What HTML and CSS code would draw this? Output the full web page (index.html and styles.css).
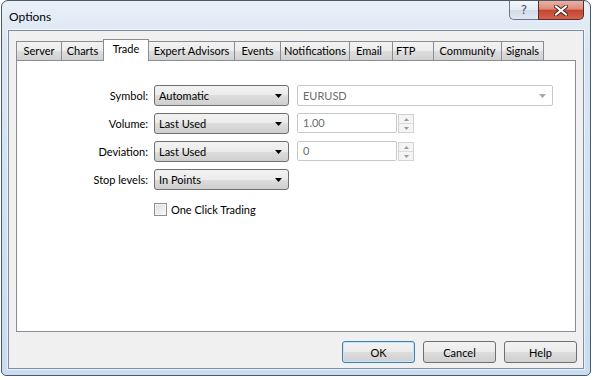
FILE: index.html
```html
<!DOCTYPE html>
<html lang="en">
<head>
    <meta charset="UTF-8">
    <title>Options</title>
    <link rel="stylesheet" href="styles.css">
</head>
<body>
    <div class="window">
        <div class="titlebar">
            <span class="title">Options</span>
            <div class="caption-buttons">
                <div class="cap-btn cap-help">?</div>
                <div class="cap-btn cap-close">
                    <svg width="14" height="11" viewBox="0 0 14 11">
                        <path d="M2 1.5 L12 9.5 M12 1.5 L2 9.5" stroke="#4a2620" stroke-width="4" stroke-linecap="square"/>
                        <path d="M2 1.5 L12 9.5 M12 1.5 L2 9.5" stroke="#ffffff" stroke-width="2" stroke-linecap="square"/>
                    </svg>
                </div>
            </div>
        </div>

        <div class="client">
            <div class="tabs">
                <div class="tab tab-server">Server</div>
                <div class="tab tab-charts">Charts</div>
                <div class="tab tab-trade active">Trade</div>
                <div class="tab tab-experts">Expert Advisors</div>
                <div class="tab tab-events">Events</div>
                <div class="tab tab-notify">Notifications</div>
                <div class="tab tab-email">Email</div>
                <div class="tab tab-ftp">FTP</div>
                <div class="tab tab-community">Community</div>
                <div class="tab tab-signals">Signals</div>
            </div>

            <div class="panel">
                <div class="form">
                    <div class="field-label">Symbol:</div>
                    <div class="combo">
                        <span>Automatic</span>
                        <svg class="arrow" width="7" height="4" viewBox="0 0 7 4"><polygon points="0,0 7,0 3.5,4"/></svg>
                    </div>
                    <div class="combo combo-disabled combo-wide">
                        <span>EURUSD</span>
                        <svg class="arrow" width="7" height="4" viewBox="0 0 7 4"><polygon points="0,0 7,0 3.5,4"/></svg>
                    </div>

                    <div class="field-label">Volume:</div>
                    <div class="combo">
                        <span>Last Used</span>
                        <svg class="arrow" width="7" height="4" viewBox="0 0 7 4"><polygon points="0,0 7,0 3.5,4"/></svg>
                    </div>
                    <div class="spin-field">
                        <div class="edit">1.00</div>
                        <div class="spinner">
                            <div class="spin-part"><svg width="5" height="3" viewBox="0 0 5 3"><polygon points="0,3 5,3 2.5,0"/></svg></div>
                            <div class="spin-part"><svg width="5" height="3" viewBox="0 0 5 3"><polygon points="0,0 5,0 2.5,3"/></svg></div>
                        </div>
                    </div>

                    <div class="field-label">Deviation:</div>
                    <div class="combo">
                        <span>Last Used</span>
                        <svg class="arrow" width="7" height="4" viewBox="0 0 7 4"><polygon points="0,0 7,0 3.5,4"/></svg>
                    </div>
                    <div class="spin-field">
                        <div class="edit">0</div>
                        <div class="spinner">
                            <div class="spin-part"><svg width="5" height="3" viewBox="0 0 5 3"><polygon points="0,3 5,3 2.5,0"/></svg></div>
                            <div class="spin-part"><svg width="5" height="3" viewBox="0 0 5 3"><polygon points="0,0 5,0 2.5,3"/></svg></div>
                        </div>
                    </div>

                    <div class="field-label">Stop levels:</div>
                    <div class="combo">
                        <span>In Points</span>
                        <svg class="arrow" width="7" height="4" viewBox="0 0 7 4"><polygon points="0,0 7,0 3.5,4"/></svg>
                    </div>
                    <div></div>

                    <div class="check-row">
                        <div class="checkbox"></div>
                        <span>One Click Trading</span>
                    </div>
                </div>
            </div>

            <div class="buttons">
                <button class="btn btn-default">OK</button>
                <button class="btn">Cancel</button>
                <button class="btn">Help</button>
            </div>
        </div>
    </div>
</body>
</html>
```

FILE: styles.css
```css
body {
    margin: 0;
    background: #ffffff;
    font-family: Lato, "Noto Sans", sans-serif;
    font-size: 11px;
    color: #000000;
}

.window {
    box-sizing: border-box;
    width: 590px;
    height: 376px;
    margin-left: 1px;
    padding: 0 6px 6px 6px;
    border: 1px solid #4a5868;
    border-radius: 7px 7px 5px 5px;
    background: linear-gradient(#e9f0f8, #d9e6f4 12%, #c9dcf1);
    display: flex;
    flex-direction: column;
}

/* title bar */

.titlebar {
    height: 29px;
    display: flex;
    justify-content: space-between;
    align-items: flex-start;
    flex-shrink: 0;
}

.title {
    margin-top: 8px;
    margin-left: 1px;
    font-size: 12px;
}

.caption-buttons {
    display: flex;
}

.cap-btn {
    box-sizing: border-box;
    height: 19px;
    display: flex;
    justify-content: center;
    align-items: center;
}

.cap-help {
    width: 29px;
    border: 1px solid #6b7888;
    border-top: none;
    border-right: none;
    border-radius: 0 0 0 5px;
    background: linear-gradient(#f4f7fb, #e3eaf3 50%, #d0dcea 51%, #e0e8f2);
    color: #4a5563;
    font-size: 12px;
    font-family: "DejaVu Sans", sans-serif;
    line-height: 17px;
}

.cap-close {
    width: 46px;
    border: 1px solid #5e2c26;
    border-top: none;
    border-radius: 0 0 5px 0;
    background: linear-gradient(#eab1a4, #da8a7a 45%, #c5452f 52%, #d2624f);
}

/* client area */

.client {
    flex: 1;
    box-sizing: border-box;
    padding: 8px 7px 5px 7px;
    background: #f0f0f0;
    border: 1px solid #7d8ea3;
    box-shadow: 0 0 0 1px rgba(255, 255, 255, 0.6);
    display: flex;
    flex-direction: column;
}

.tabs {
    display: flex;
    align-items: flex-end;
    height: 21px;
}

.tab {
    box-sizing: border-box;
    height: 19px;
    margin-left: -1px;
    border: 1px solid #898c95;
    border-bottom: none;
    background: linear-gradient(#f3f3f3, #ebebeb 50%, #dedede 50%, #d0d0d0);
    text-align: center;
    line-height: 18px;
    white-space: nowrap;
}

.tab:first-child {
    margin-left: 0;
}

.tab.active {
    height: 22px;
    margin-bottom: -1px;
    background: #ffffff;
    line-height: 17px;
    position: relative;
    z-index: 1;
}

.tab-server { width: 46px; }
.tab-charts { width: 43px; }
.tab-trade { width: 46px; }
.tab-experts { width: 87px; }
.tab-events { width: 47px; }
.tab-notify { width: 70px; }
.tab-email { width: 44px; text-align: left; padding-left: 6px; }
.tab-ftp { width: 42px; text-align: left; padding-left: 3px; }
.tab-community { width: 69px; }
.tab-signals { width: 43px; }

.panel {
    box-sizing: border-box;
    height: 272px;
    padding-top: 24px;
    border: 1px solid #898c95;
    background: #ffffff;
}

/* trade form */

.form {
    display: grid;
    grid-template-columns: 137px 143px 256px;
    grid-auto-rows: 21px;
    row-gap: 7px;
}

.field-label {
    padding-right: 6px;
    text-align: right;
    line-height: 21px;
}

.combo {
    box-sizing: border-box;
    width: 135px;
    height: 21px;
    padding: 0 6px 0 4px;
    border: 1px solid #707070;
    border-radius: 3px;
    background: linear-gradient(#f2f2f2, #ebebeb 50%, #dddddd 50%, #cfcfcf);
    display: flex;
    justify-content: space-between;
    align-items: center;
}

.combo .arrow {
    fill: #000000;
}

.combo-wide {
    width: 256px;
}

.combo-disabled {
    border-color: #c8c8c8;
    border-radius: 2px;
    background: #ffffff;
    color: #6d6d6d;
    padding-left: 5px;
}

.combo-disabled .arrow {
    fill: #a8a8a8;
}

.spin-field {
    display: flex;
    gap: 1px;
    height: 20px;
}

.edit {
    box-sizing: border-box;
    width: 100px;
    height: 20px;
    padding-left: 5px;
    border: 1px solid #c8c8c8;
    border-radius: 2px;
    color: #6d6d6d;
    line-height: 18px;
}

.spinner {
    box-sizing: border-box;
    width: 16px;
    height: 19px;
    margin-top: 1px;
    border: 1px solid #d2d2d2;
    background: #f4f4f4;
    display: flex;
    flex-direction: column;
}

.spin-part {
    flex: 1;
    display: flex;
    justify-content: center;
    align-items: center;
    fill: #9a9a9a;
}

.spin-part:first-child {
    border-bottom: 1px solid #dcdcdc;
}

.check-row {
    grid-column: 2 / span 2;
    height: 15px;
    margin-top: 5px;
    display: flex;
    align-items: center;
    gap: 4px;
}

.checkbox {
    box-sizing: border-box;
    width: 13px;
    height: 13px;
    border: 1px solid #8f8f8f;
    background: linear-gradient(135deg, #dcdcdc, #fafafa);
    box-shadow: inset 0 0 0 1px #f4f4f4;
}

/* dialog buttons */

.buttons {
    margin-top: 9px;
    margin-right: -1px;
    display: flex;
    justify-content: flex-end;
    gap: 8px;
}

.btn {
    box-sizing: border-box;
    width: 73px;
    height: 22px;
    padding: 0;
    border: 1px solid #707070;
    border-radius: 3px;
    background: linear-gradient(#f2f2f2, #ebebeb 50%, #dddddd 50%, #cfcfcf);
    font-family: Lato, "Noto Sans", sans-serif;
    font-size: 11px;
    color: #000000;
}

.btn-default {
    border-color: #3c7fb1;
    box-shadow: inset 0 0 0 1px #c4e5f6;
}
```
